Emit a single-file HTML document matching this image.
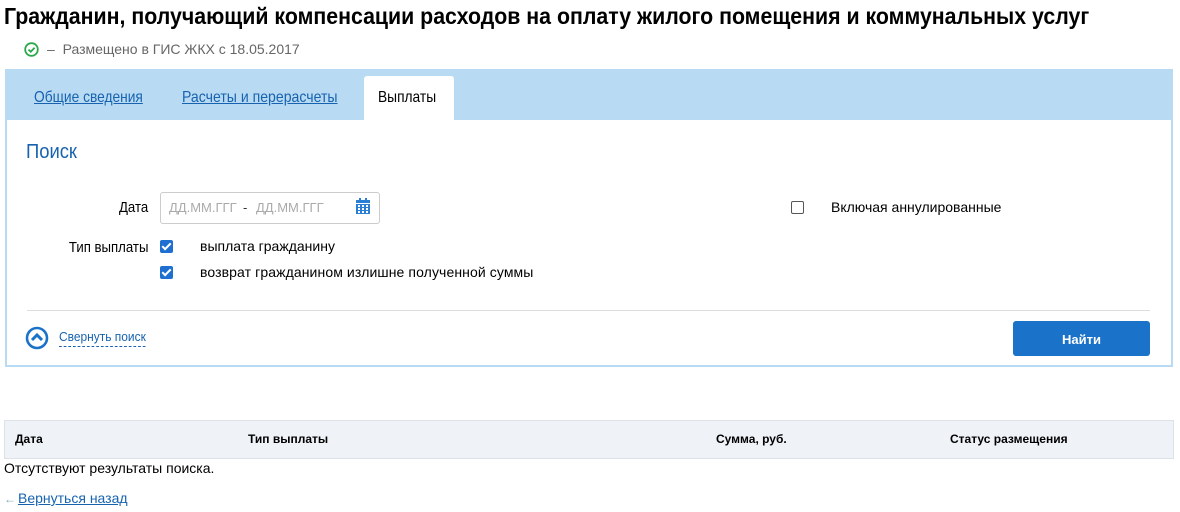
<!DOCTYPE html>
<html><head><meta charset="utf-8"><style>
body{margin:0;width:1180px;height:512px;background:#fff;font-family:"Liberation Sans",sans-serif;color:#000;position:relative;overflow:hidden}
.a{position:absolute;white-space:nowrap}
.n{transform-origin:0 0;transform:scaleX(0.88)}
.r{transform-origin:100% 0;transform:scaleX(0.88);text-align:right}
.cb{position:absolute;width:13px;height:13px;background:#1f6fd1;border-radius:2px}
.cb:after{content:"";position:absolute;left:4px;top:1px;width:3px;height:7px;border:solid #fff;border-width:0 2px 2px 0;transform:rotate(45deg)}
</style></head><body>
<div class="a" style="left:4px;top:3px;font-size:23px;font-weight:bold;transform-origin:0 0;transform:scaleX(0.927)">Гражданин, получающий компенсации расходов на оплату жилого помещения и коммунальных услуг</div>
<svg class="a" style="left:24px;top:42px" width="15" height="15"><circle cx="7.5" cy="7.5" r="6.3" fill="none" stroke="#2aa84a" stroke-width="1.8"/><path d="M4.5 7.6l2.2 2.1 3.9-4" fill="none" stroke="#2aa84a" stroke-width="1.8"/></svg>
<div class="a" style="left:47px;top:41px;font-size:14px;color:#666">–&nbsp; Размещено в ГИС ЖКХ с 18.05.2017</div>
<div class="a" style="left:5px;top:69px;width:1168px;height:51px;background:#b8dbf3"></div>
<div class="a" style="left:5px;top:120px;width:1164px;height:245px;border:2px solid #b8dbf3;border-top:none"></div>
<div class="a n" style="left:34px;top:89px;font-size:16px;color:#1763b0;text-decoration:underline;transform:scaleX(0.86)">Общие сведения</div>
<div class="a n" style="left:182px;top:89px;font-size:16px;color:#1763b0;text-decoration:underline;transform:scaleX(0.88)">Расчеты и перерасчеты</div>
<div class="a" style="left:364px;top:76px;width:90px;height:44px;background:#fff;border-radius:3px 3px 0 0"></div>
<div class="a n" style="left:378px;top:89px;font-size:16px;transform:scaleX(0.86)">Выплаты</div>
<div class="a n" style="left:26px;top:141px;font-size:20px;color:#1763b0;font-weight:500;transform:scaleX(0.92)">Поиск</div>
<div class="a r" style="right:1032px;top:199px;font-size:15px">Дата</div>
<div class="a" style="left:160px;top:192px;width:218px;height:30px;border:1px solid #ccc;border-radius:3px;overflow:hidden"></div>
<div class="a" style="left:169px;top:200px;font-size:13px;color:#aaa;width:68px;overflow:hidden">ДД.ММ.ГГГГ</div>
<div class="a" style="left:243px;top:200px;font-size:13px;color:#333">-</div>
<div class="a" style="left:256px;top:200px;font-size:13px;color:#aaa;width:68px;overflow:hidden">ДД.ММ.ГГГГ</div>
<svg class="a" style="left:355px;top:198px" width="16" height="17"><rect x="1" y="2" width="14" height="14" fill="#2a7fd4"/><rect x="1" y="5" width="14" height="1" fill="#fff"/><g fill="#fff"><rect x="3" y="7" width="2" height="2"/><rect x="7" y="7" width="2" height="2"/><rect x="11" y="7" width="2" height="2"/><rect x="3" y="10" width="2" height="2"/><rect x="7" y="10" width="2" height="2"/><rect x="11" y="10" width="2" height="2"/><rect x="3" y="13" width="2" height="2"/><rect x="7" y="13" width="2" height="2"/><rect x="11" y="13" width="2" height="2"/></g><rect x="4" y="0" width="2" height="4" fill="#2a7fd4"/><rect x="10" y="0" width="2" height="4" fill="#2a7fd4"/></svg>
<div class="a" style="left:791px;top:201px;width:11px;height:11px;border:1px solid #555;border-radius:2px"></div>
<div class="a" style="left:831px;top:199px;font-size:14px">Включая аннулированные</div>
<div class="a r" style="right:1032px;top:239px;font-size:15px">Тип выплаты</div>
<div class="cb" style="left:160px;top:240px"></div>
<div class="a" style="left:200px;top:238px;font-size:14px">выплата гражданину</div>
<div class="cb" style="left:160px;top:266px"></div>
<div class="a" style="left:200px;top:264px;font-size:14px;letter-spacing:0.1px">возврат гражданином излишне полученной суммы</div>
<div class="a" style="left:27px;top:310px;width:1123px;height:1px;background:#ddd"></div>
<svg class="a" style="left:25px;top:326px" width="24" height="24"><circle cx="12" cy="12" r="10" fill="none" stroke="#1a73c8" stroke-width="2.6"/><path d="M7 14l5-5 5 5" fill="none" stroke="#1a73c8" stroke-width="3"/></svg>
<div class="a n" style="left:59px;top:329px;font-size:13px;color:#1763b0;border-bottom:1px dashed #1763b0;padding-bottom:2px;transform:scaleX(0.92)">Свернуть поиск</div>
<div class="a" style="left:1013px;top:321px;width:137px;height:35px;background:#1b72c9;border-radius:3px;color:#fff;font-size:13px;font-weight:bold;text-align:center;line-height:37px">Найти</div>
<div class="a" style="left:4px;top:420px;width:1168px;height:37px;background:#eff2f7;border:1px solid #dde2ea"></div>
<div class="a" style="left:15px;top:432px;font-size:12px;font-weight:bold">Дата</div>
<div class="a" style="left:248px;top:432px;font-size:12px;font-weight:bold">Тип выплаты</div>
<div class="a" style="left:716px;top:432px;font-size:12px;font-weight:bold">Сумма, руб.</div>
<div class="a" style="left:950px;top:432px;font-size:12px;font-weight:bold">Статус размещения</div>
<div class="a" style="left:4px;top:460px;font-size:14px">Отсутствуют результаты поиска.</div>
<div class="a" style="left:4px;top:490px;font-size:14px;color:#1763b0"><span style="color:#8ab;font-size:12px">←</span><span style="text-decoration:underline;margin-left:2px">Вернуться назад</span></div>
</body></html>
